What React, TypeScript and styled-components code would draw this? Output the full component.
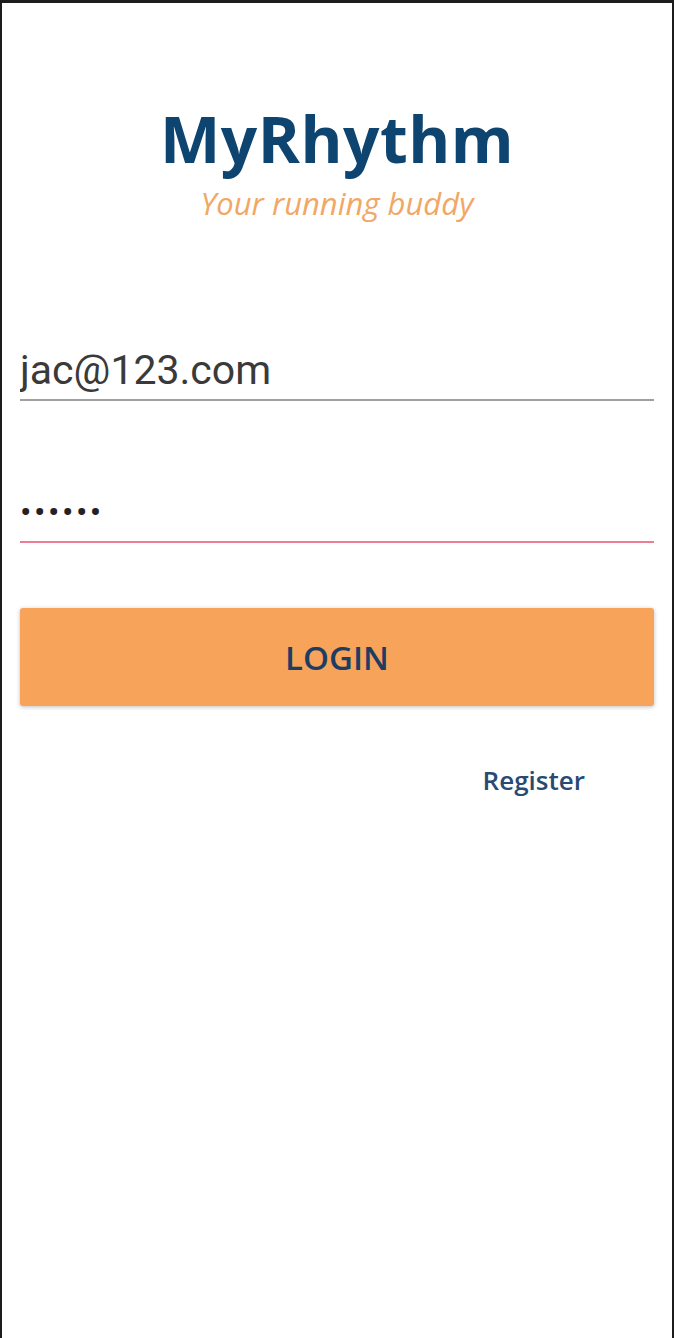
import { createGlobalStyle } from 'styled-components'
import styled from 'styled-components'

const GlobalStyle = createGlobalStyle`
  html, body {
    margin: 0;
    padding: 0;
    background: #ffffff;
  }
`

export default function App() {
  return (
    <>
      <GlobalStyle />
      <Screen>
        <Brand>
          <Title>MyRhythm</Title>
          <Tagline>Your running buddy</Tagline>
        </Brand>
        <Form>
          <Field>
            <FieldInput type="email" defaultValue="jac@123.com" />
          </Field>
          <Field $focused>
            <PasswordInput type="password" defaultValue="123456" />
          </Field>
          <LoginButton type="button">LOGIN</LoginButton>
          <LinkRow>
            <RegisterLink>Register</RegisterLink>
          </LinkRow>
        </Form>
      </Screen>
    </>
  )
}

const Screen = styled.div`
  box-sizing: border-box;
  width: 674px;
  height: 1338px;
  border: 2px solid #1c1c1c;
  border-top-width: 3px;
  border-bottom: none;
  background: #ffffff;
  display: flex;
  flex-direction: column;
  padding: 0 18px;
`

const Brand = styled.div`
  display: flex;
  flex-direction: column;
  align-items: center;
  margin-top: 96px;
`

const Title = styled.h1`
  margin: 0;
  font-family: 'Open Sans', 'Noto Sans', sans-serif;
  font-weight: 700;
  font-size: 64px;
  line-height: 80px;
  letter-spacing: 0.5px;
  color: #0e4470;
`

const Tagline = styled.div`
  font-family: 'Open Sans', 'Noto Sans', sans-serif;
  font-style: italic;
  font-size: 31px;
  line-height: 36px;
  color: #f2a765;
  margin-top: 6px;
`

const Form = styled.div`
  display: flex;
  flex-direction: column;
  margin-top: 120px;
`

const Field = styled.div<{ $focused?: boolean }>`
  border-bottom: 2px solid ${({ $focused }) => ($focused ? '#ec7d93' : '#a0a0a0')};
  height: 58px;
  display: flex;
  align-items: center;
  margin-bottom: 82px;

  &:nth-child(2) {
    margin-bottom: 65px;
  }
`

const FieldInput = styled.input`
  border: none;
  outline: none;
  background: transparent;
  width: 100%;
  padding: 0;
  font-family: Roboto, 'Liberation Sans', sans-serif;
  font-size: 41px;
  color: #3a3a3a;
`

const PasswordInput = styled(FieldInput)`
  color: #222222;
  font-size: 34px;
  letter-spacing: 2.5px;
`

const LoginButton = styled.button`
  height: 98px;
  border: none;
  border-radius: 3px;
  background: #f7a35a;
  box-shadow: 0 1px 4px rgba(0, 0, 0, 0.25);
  font-family: 'Open Sans', 'Noto Sans', sans-serif;
  font-weight: 600;
  font-size: 33px;
  color: #1d3d63;
  cursor: pointer;
`

const LinkRow = styled.div`
  display: flex;
  justify-content: flex-end;
  padding-right: 69px;
  margin-top: 56px;
`

const RegisterLink = styled.span`
  font-family: 'Open Sans', 'Noto Sans', sans-serif;
  font-weight: 600;
  font-size: 26px;
  color: #294a72;
`
